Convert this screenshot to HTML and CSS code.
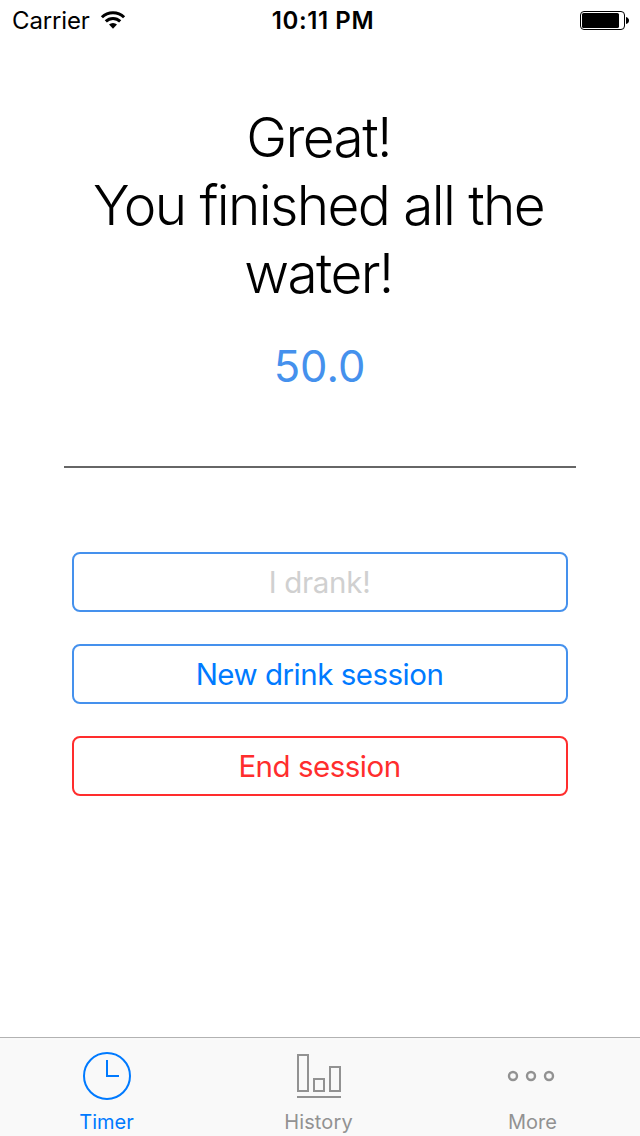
FILE: index.html
```
<!DOCTYPE html>
<html lang="en">
<head>
<meta charset="utf-8">
<title>Timer</title>
<link rel="stylesheet" href="styles.css">
</head>
<body>
<div class="screen">
  <header class="status">
    <div class="carrier">
      <span>Carrier</span>
      <svg class="wifi" width="26" height="20" viewBox="0 0 26 20">
        <path d="M13 18.8 L9 14.6 A5.7 5.7 0 0 1 17 14.6 Z" fill="#000"/>
        <path d="M5.8 11.4 A10.2 10.2 0 0 1 20.2 11.4" fill="none" stroke="#000" stroke-width="3"/>
        <path d="M1.9 7.3 A15.8 15.8 0 0 1 24.1 7.3" fill="none" stroke="#000" stroke-width="3"/>
      </svg>
    </div>
    <div class="clock">10:11 PM</div>
    <svg class="battery" width="50" height="20" viewBox="0 0 50 20">
      <rect x=".5" y=".5" width="44" height="18" rx="3.5" fill="none" stroke="#000"/>
      <rect x="2" y="2" width="37" height="15" rx="1.6" fill="#000"/>
      <path d="M46 6 Q49 7 49 9.5 Q49 12 46 13 Z" fill="#000"/>
    </svg>
  </header>
  <main class="content">
    <h1 class="title"><span class="line">Great!</span><span class="line">You finished all the</span><span class="line">water!</span></h1>
    <div class="amount">50.0</div>
    <hr class="rule">
    <div class="actions">
      <button class="btn drank" disabled>I drank!</button>
      <button class="btn new">New drink session</button>
      <button class="btn end">End session</button>
    </div>
  </main>
  <nav class="tabs">
    <a class="tab active">
      <svg width="50" height="50" viewBox="0 0 50 50" fill="none" stroke="currentColor" stroke-width="2">
        <circle cx="25" cy="25" r="23"/><path d="M25 9V25H37"/>
      </svg>
      <span class="t-timer">Timer</span>
    </a>
    <a class="tab">
      <svg width="50" height="50" viewBox="0 0 50 50" fill="none" stroke="currentColor" stroke-width="2">
        <path d="M4 4H14V40H4ZM20 28H30V40H20ZM36 16H46V40H36ZM3 46H47"/>
      </svg>
      <span class="t-history">History</span>
    </a>
    <a class="tab">
      <svg width="50" height="50" viewBox="0 0 50 50" fill="none" stroke="currentColor" stroke-width="2.4">
        <circle cx="7" cy="25" r="4"/><circle cx="25" cy="25" r="4"/><circle cx="43" cy="25" r="4"/>
      </svg>
      <span class="t-more">More</span>
    </a>
  </nav>
</div>
</body>
</html>
```
FILE: styles.css
```
* { box-sizing: border-box; }
body { margin: 0; background: #fff; color: #000; font-family: Inter, "Liberation Sans", sans-serif; }
.screen { width: 640px; height: 1136px; display: flex; flex-direction: column; }
.status { height: 41px; display: grid; grid-template-columns: 1fr auto 1fr; align-items: center; padding: 0 10px 0 12px; font-size: 24px; line-height: 40px; }
.carrier { display: flex; align-items: center; gap: 10px; letter-spacing: -.15px; }
.wifi { margin-top: -1px; }
.clock { font-weight: 560; padding-left: 4px; letter-spacing: .6px; }
.battery { justify-self: end; }
.content { flex: 1; display: flex; flex-direction: column; padding: 62px 64px 0; text-align: center; }
.title { margin: 0; padding-right: 3px; font-size: 55px; line-height: 68px; font-weight: 300; letter-spacing: -1.6px; }
.line { display: block; white-space: nowrap; }
.amount { margin-top: 31px; padding-right: 1px; font-size: 43.5px; line-height: 56px; color: #4591ed; }
.rule { width: 100%; height: 2px; margin: 72px 0 0; border: 0; background: #666; }
.actions { display: flex; flex-direction: column; gap: 32px; padding: 84px 8px 0; }
.btn { height: 60px; padding: 1px 1px 0 0; border: 2px solid #4591ed; border-radius: 8px; background: #fff; font: 400 29.5px/55px Inter, "Liberation Sans", sans-serif; letter-spacing: -.5px; color: #007aff; }
.drank { color: #d0d0d0; letter-spacing: -.3px; }
.end { border-color: #ff2d2d; color: #ff2d2d; }
.tabs { height: 99px; display: flex; border-top: 1px solid #b2b2b2; background: #f9f9f9; padding: 13px 3px 0 1px; }
.tab { flex: 1; display: flex; flex-direction: column; align-items: center; color: #929292; font-size: 20px; line-height: 24px; }
.tab span { margin-top: 9px; }
.tab svg { display: block; }
.active { color: #007aff; }
.t-timer { padding-right: 1px; }
.t-history { letter-spacing: .15px; padding-right: 1px; }
.t-more { padding-left: 3px; }
```
